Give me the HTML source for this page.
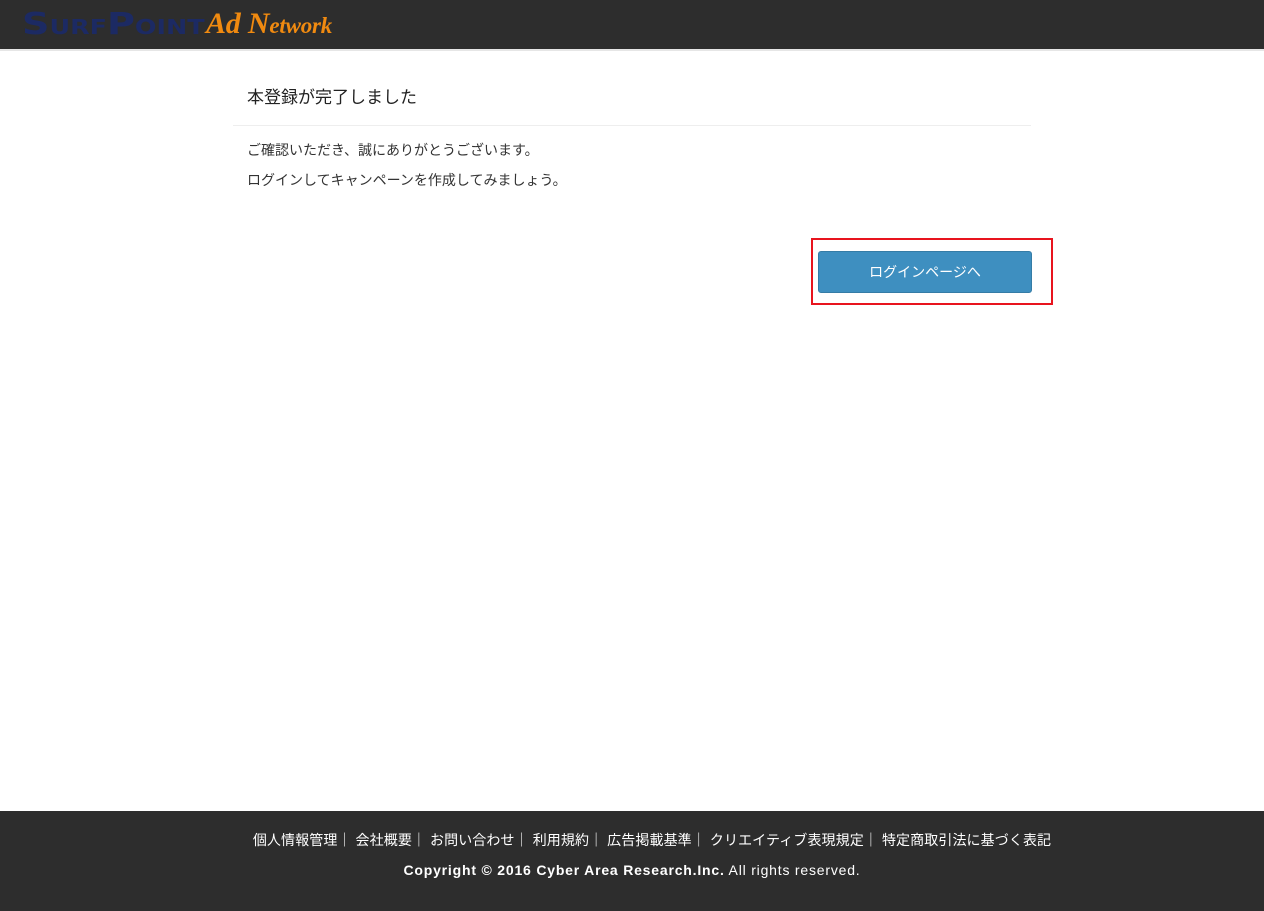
<!DOCTYPE html>
<html><head><meta charset="utf-8"><style>
body{margin:0;width:1264px;height:911px;position:relative;background:#fff;font-family:"Liberation Sans","Noto Sans CJK JP",sans-serif;overflow:hidden}
.hdr{position:absolute;left:0;top:0;width:1264px;height:49px;background:#2d2d2d;border-bottom:2px solid #e6e6e6}
.logo1{position:absolute;left:22px;top:7px;font-family:"DejaVu Sans",sans-serif;font-weight:bold;color:#1c2a63;font-size:30px;letter-spacing:0px;line-height:36px;transform:scaleX(1.27);transform-origin:left}
.logo1 small{font-size:20px}
.logo2{position:absolute;left:206px;top:7px;font-family:"Liberation Serif",serif;font-style:italic;font-weight:bold;color:#f08a10;font-size:30px;line-height:34px;letter-spacing:-0.2px}
.logo2 small{font-size:23px}
h1{position:absolute;left:247px;top:86px;margin:0;font-size:17px;font-weight:normal;color:#222;line-height:24px}
.line{position:absolute;left:233px;top:125px;width:798px;height:1px;background:#eee}
p{position:absolute;left:247px;margin:0;font-size:14px;color:#333;line-height:18px}
.box{position:absolute;left:811px;top:238px;width:238px;height:63px;border:2px solid #e8141e}
.btn{position:absolute;left:818px;top:251px;width:214px;height:42px;background:#3e8fc0;border:1px solid #357ca6;border-radius:3px;box-sizing:border-box;color:#fff;font-size:14px;text-align:center;line-height:40px}
.ftr{position:absolute;left:0;top:811px;width:1264px;height:100px;background:#2d2d2d;color:#fff;text-align:center}
.l1{position:absolute;top:20px;left:40px;width:1224px;font-size:14px;line-height:18px;letter-spacing:0.1px}
.l2{position:absolute;top:50px;width:100%;font-size:14px;line-height:18px;letter-spacing:0.8px}
</style></head><body>
<div class="hdr"><div class="logo1">S<small>URF</small>P<small>OINT</small></div><div class="logo2">Ad N<small>etwork</small></div></div>
<h1>本登録が完了しました</h1>
<div class="line"></div>
<p style="top:141px">ご確認いただき、誠にありがとうございます。</p>
<p style="top:171px">ログインしてキャンペーンを作成してみましょう。</p>
<div class="box"></div>
<div class="btn">ログインページへ</div>
<div class="ftr">
<div class="l1">個人情報管理｜ 会社概要｜ お問い合わせ｜ 利用規約｜ 広告掲載基準｜ クリエイティブ表現規定｜ 特定商取引法に基づく表記</div>
<div class="l2"><b>Copyright © 2016 Cyber Area Research.Inc.</b> All rights reserved.</div>
</div>
</body></html>
